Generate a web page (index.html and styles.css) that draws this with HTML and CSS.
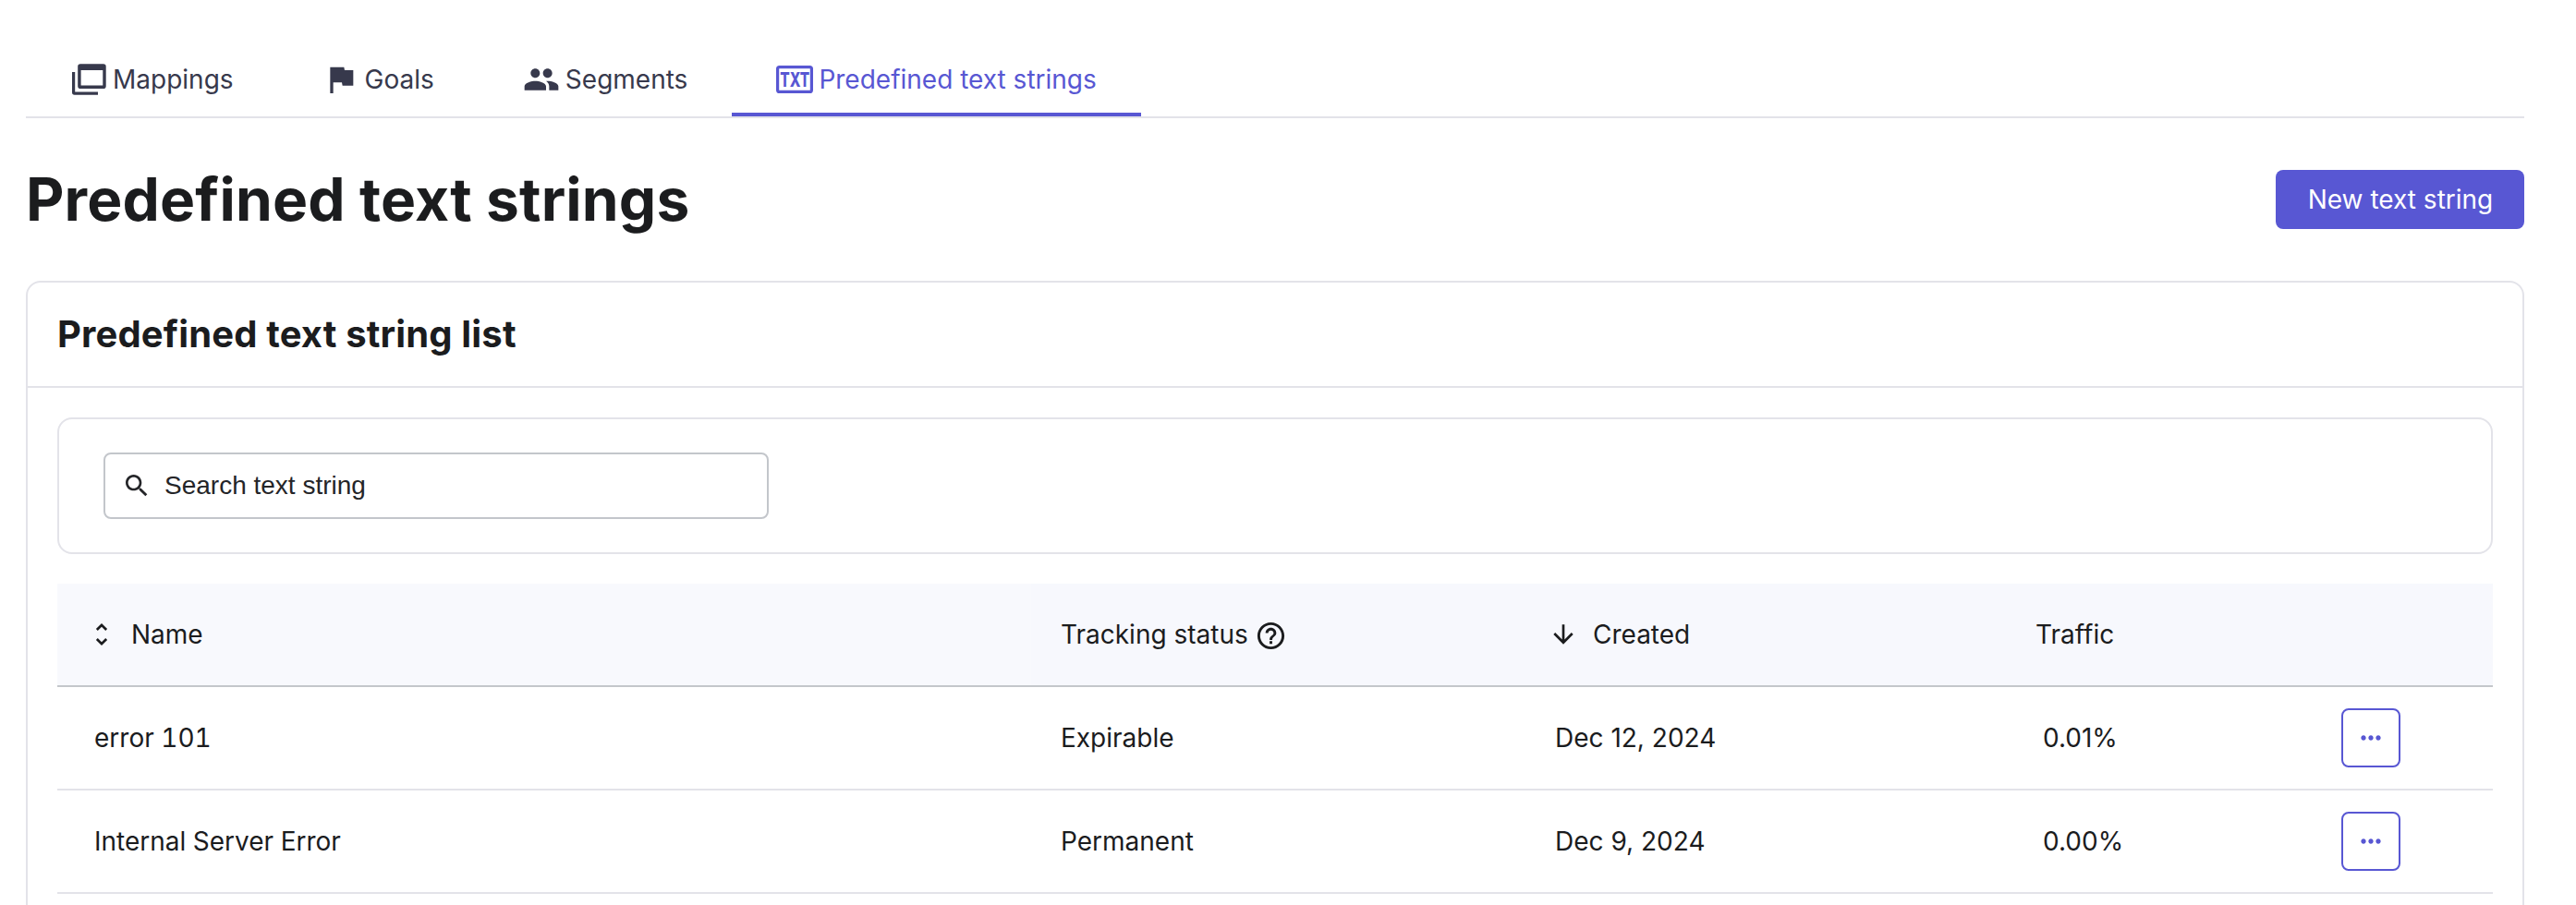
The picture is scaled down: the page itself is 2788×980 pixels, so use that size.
FILE: index.html
```html
<!DOCTYPE html>
<html lang="en">
<head>
    <meta charset="UTF-8">
    <meta name="viewport" content="width=device-width, initial-scale=1.0">
    <title>Predefined text strings</title>
    <link rel="stylesheet" href="styles.css">
</head>
<body>
    <nav class="tabs">
        <a class="tab">
            <svg class="tab-icon" viewBox="0 0 40 40">
                <path d="M2 12h3.2v21.4H30v3.3H4.6A2.6 2.6 0 0 1 2 34.1z"/>
                <path fill-rule="evenodd" d="M11 3.3h24.9a2.8 2.8 0 0 1 2.8 2.8v21.1a2.8 2.8 0 0 1-2.8 2.8H11a2.8 2.8 0 0 1-2.8-2.8V6.1A2.8 2.8 0 0 1 11 3.3zM11.6 10v16.6h23.7V10z"/>
            </svg>
            Mappings
        </a>
        <a class="tab">
            <svg class="tab-icon" viewBox="0 0 24 24"><path d="M14.4 6L14 4H5v17h2v-7h5.6l.4 2h7V6z"/></svg>
            Goals
        </a>
        <a class="tab">
            <svg class="tab-icon" viewBox="0 0 24 24"><path d="M16 11c1.66 0 2.99-1.34 2.99-3S17.66 5 16 5c-1.66 0-3 1.34-3 3s1.34 3 3 3zm-8 0c1.66 0 2.99-1.34 2.99-3S9.66 5 8 5C6.34 5 5 6.34 5 8s1.34 3 3 3zm0 2c-2.33 0-7 1.17-7 3.5V19h14v-2.5c0-2.33-4.67-3.5-7-3.5zm8 0c-.29 0-.62.02-.97.05 1.16.84 1.97 1.97 1.97 3.45V19h6v-2.5c0-2.33-4.67-3.5-7-3.5z"/></svg>
            Segments
        </a>
        <a class="tab active">
            <svg class="tab-icon" viewBox="0 0 40 40">
                <rect class="outline" x="1.6" y="6.6" width="36.8" height="26.8" rx="2"/>
                <text class="txt" x="4.2" y="28.2" textLength="32" lengthAdjust="spacingAndGlyphs">TXT</text>
            </svg>
            Predefined text strings
        </a>
    </nav>

    <header class="page-header">
        <h1>Predefined text strings</h1>
        <button class="btn-primary">New text string</button>
    </header>

    <section class="card">
        <h2 class="card-title">Predefined text string list</h2>
        <div class="card-body">
            <div class="filters">
                <label class="search">
                    <svg class="icon" viewBox="0 0 24 24"><path d="M15.5 14h-.79l-.28-.27C15.41 12.59 16 11.11 16 9.5 16 5.91 13.09 3 9.5 3S3 5.91 3 9.5 5.91 16 9.5 16c1.61 0 3.09-.59 4.23-1.57l.27.28v.79l5 4.99L20.49 19l-4.99-5zm-6 0C7.01 14 5 11.99 5 9.5S7.01 5 9.5 5 14 7.01 14 9.5 11.99 14 9.5 14z"/></svg>
                    <input type="text" placeholder="Search text string">
                </label>
            </div>

            <table class="strings">
                <colgroup>
                    <col class="col-name">
                    <col class="col-status">
                    <col class="col-created">
                    <col class="col-traffic">
                    <col>
                </colgroup>
                <thead>
                    <tr>
                        <th>
                            <span class="th-label">
                                <svg class="icon sort-both" viewBox="0 0 24 24"><path d="M12 5.83L15.17 9l1.41-1.41L12 3 7.41 7.59 8.83 9 12 5.83zm0 12.34L8.83 15l-1.41 1.41L12 21l4.59-4.59L15.17 15 12 18.17z"/></svg>
                                Name
                            </span>
                        </th>
                        <th>
                            <span class="th-label">
                                Tracking status
                                <svg class="help" viewBox="0 0 24 24"><path d="M11 18h2v-2h-2v2zm1-16C6.48 2 2 6.48 2 12s4.48 10 10 10 10-4.48 10-10S17.52 2 12 2zm0 18c-4.41 0-8-3.59-8-8s3.59-8 8-8 8 3.59 8 8-3.59 8-8 8zm0-14c-2.21 0-4 1.79-4 4h2c0-1.1.9-2 2-2s2 .9 2 2c0 2-3 1.75-3 5h2c0-2.25 3-2.5 3-5 0-2.21-1.79-4-4-4z"/></svg>
                            </span>
                        </th>
                        <th>
                            <span class="th-label">
                                <svg class="icon sort-down" viewBox="0 0 24 24"><path d="M20 12l-1.41-1.41L13 16.17V4h-2v12.17l-5.58-5.59L4 12l8 8 8-8z"/></svg>
                                Created
                            </span>
                        </th>
                        <th>Traffic</th>
                        <th></th>
                    </tr>
                </thead>
                <tbody>
                    <tr>
                        <td class="name">error 101</td>
                        <td>Expirable</td>
                        <td>Dec 12, 2024</td>
                        <td class="traffic">0.01%</td>
                        <td>
                            <button class="btn-more">
                                <svg class="icon" viewBox="0 0 24 24"><path d="M6 10c-1.1 0-2 .9-2 2s.9 2 2 2 2-.9 2-2-.9-2-2-2zm12 0c-1.1 0-2 .9-2 2s.9 2 2 2 2-.9 2-2-.9-2-2-2zm-6 0c-1.1 0-2 .9-2 2s.9 2 2 2 2-.9 2-2-.9-2-2-2z"/></svg>
                            </button>
                        </td>
                    </tr>
                    <tr>
                        <td class="name">Internal Server Error</td>
                        <td>Permanent</td>
                        <td>Dec 9, 2024</td>
                        <td class="traffic">0.00%</td>
                        <td>
                            <button class="btn-more">
                                <svg class="icon" viewBox="0 0 24 24"><path d="M6 10c-1.1 0-2 .9-2 2s.9 2 2 2 2-.9 2-2-.9-2-2-2zm12 0c-1.1 0-2 .9-2 2s.9 2 2 2 2-.9 2-2-.9-2-2-2zm-6 0c-1.1 0-2 .9-2 2s.9 2 2 2 2-.9 2-2-.9-2-2-2z"/></svg>
                            </button>
                        </td>
                    </tr>
                </tbody>
            </table>
        </div>
    </section>
</body>
</html>
```
FILE: styles.css
```css
* {
    box-sizing: border-box;
}
body {
    margin: 0;
    padding: 46px 56px 0 28px;
    height: 980px;
    overflow: hidden;
    font-family: Inter, "Liberation Sans", sans-serif;
    font-size: 28px;
    line-height: 40px;
    color: #1b1c1e;
    background-color: #fff;
}
svg {
    display: block;
    flex: none;
    fill: currentColor;
    overflow: visible;
}
.icon {
    width: 32px;
    height: 32px;
}

/* Tabs */
.tabs {
    display: flex;
    height: 82px;
    border-bottom: 2px solid #e3e3e9;
}
.tab {
    display: flex;
    align-items: center;
    gap: 6px;
    padding: 4px 48px 0;
    border-bottom: 4px solid transparent;
    color: #37394c;
    white-space: nowrap;
}
.tab.active {
    color: #5857d3;
    border-bottom-color: #5857d3;
}
.tab-icon {
    width: 40px;
    height: 40px;
}
.outline {
    fill: none;
    stroke: currentColor;
    stroke-width: 3.2;
}
.txt {
    font-size: 22px;
    font-weight: 800;
}

/* Page header */
.page-header {
    display: flex;
    align-items: center;
    justify-content: space-between;
    height: 176px;
}
h1 {
    margin: 0;
    font-size: 64px;
    line-height: 80px;
    font-weight: 700;
    letter-spacing: 0.15px;
}
.btn-primary {
    width: 269px;
    height: 64px;
    padding: 0 0 0 1px;
    border: none;
    border-radius: 8px;
    background-color: #5857d3;
    color: #fff;
    font: 400 28px/40px Inter, sans-serif;
}

/* Card */
.card {
    height: 720px;
    border: 2px solid #e3e3e9;
    border-radius: 16px;
}
.card-title {
    margin: 0;
    padding: 31px 32px;
    border-bottom: 2px solid #e3e3e9;
    font-size: 40px;
    line-height: 50px;
    font-weight: 700;
    letter-spacing: 0.15px;
}
.card-body {
    padding: 32px;
}
.filters {
    padding: 36px 48px;
    border: 2px solid #e3e3e9;
    border-radius: 16px;
}
.search {
    display: flex;
    align-items: center;
    gap: 14px;
    width: 720px;
    height: 72px;
    padding: 0 18px;
    border: 2px solid #c3c6cb;
    border-radius: 8px;
    color: #242528;
}
.search input {
    flex: 1;
    padding: 0;
    border: none;
    outline: none;
    background: none;
    color: inherit;
    font: 28px/40px "Liberation Sans", sans-serif;
}
.search input::placeholder {
    color: inherit;
    opacity: 1;
}

/* Table */
.strings {
    width: 100%;
    margin-top: 32px;
    border-collapse: separate;
    border-spacing: 0;
    table-layout: fixed;
}
.col-name {
    width: 1054px;
}
.col-status {
    width: 535px;
}
.col-created {
    width: 520px;
}
.col-traffic {
    width: 331px;
}
.strings th,
.strings td {
    height: 112px;
    padding: 0 32px;
    text-align: left;
    font-weight: 400;
}
.strings th {
    background-color: #f7f8fd;
    border-bottom: 2px solid #c4c7cb;
}
.strings th:first-child {
    background-color: #f8f9fd;
}
.strings td {
    border-bottom: 2px solid #e3e3e9;
}
.strings td.name {
    padding-left: 40px;
    font-variant-numeric: tabular-nums;
}
.strings td.traffic {
    padding-left: 40px;
}
.th-label {
    display: flex;
    align-items: center;
}
.sort-both {
    margin-right: 16px;
}
.sort-down {
    margin: 0 16px 0 -7px;
}
.help {
    width: 35px;
    height: 35px;
    margin: 3px 0 0 7px;
}
.btn-more {
    display: flex;
    align-items: center;
    justify-content: center;
    width: 64px;
    height: 64px;
    padding: 0;
    border: 2px solid #5857d3;
    border-radius: 8px;
    background-color: #fff;
    color: #5857d3;
}
```
